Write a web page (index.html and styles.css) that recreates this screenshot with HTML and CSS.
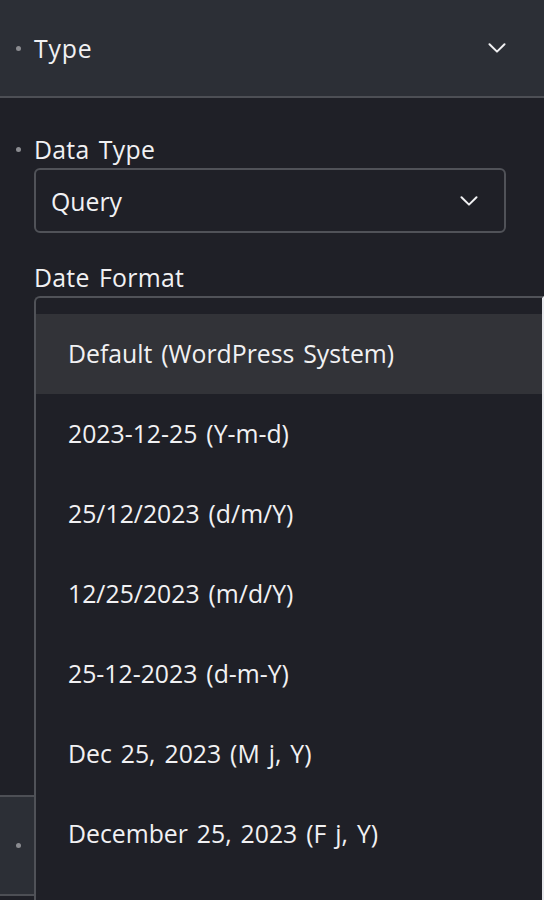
FILE: index.html
```html
<!DOCTYPE html>
<html lang="en">
<head>
<meta charset="utf-8">
<title>Field settings</title>
<link rel="stylesheet" href="styles.css">
</head>
<body>
<div class="panel">
  <section class="section">
    <header class="section-head">
      <span class="dot"></span>
      <span class="section-title">Type</span>
      <svg class="chevron" width="18" height="10" viewBox="0 0 18 10"><path d="M1.5 1.2 L9 8.6 L16.5 1.2"/></svg>
    </header>
    <div class="section-body">
      <div class="field">
        <div class="field-label has-dot"><span class="dot"></span>Data Type</div>
        <div class="select">
          <span class="select-value">Query</span>
          <svg class="chevron" width="18" height="10" viewBox="0 0 18 10"><path d="M1.5 1.2 L9 8.6 L16.5 1.2"/></svg>
        </div>
      </div>
      <div class="field">
        <div class="field-label">Date Format</div>
        <div class="select-wrap">
          <ul class="menu">
            <li class="option is-active">Default (WordPress System)</li>
            <li class="option">2023-12-25 (Y-m-d)</li>
            <li class="option">25/12/2023 (d/m/Y)</li>
            <li class="option">12/25/2023 (m/d/Y)</li>
            <li class="option">25-12-2023 (d-m-Y)</li>
            <li class="option">Dec 25, 2023 (M j, Y)</li>
            <li class="option">December 25, 2023 (F j, Y)</li>
          </ul>
        </div>
      </div>
    </div>
  </section>
  <section class="section">
    <header class="section-head section-head--next">
      <span class="dot"></span>
    </header>
  </section>
</div>
</body>
</html>
```
FILE: styles.css
```css
* { box-sizing: border-box; }

html, body {
  margin: 0;
  height: 900px;
  overflow: hidden;
  background: #1f2027;
}

body {
  font-family: "Open Sans", "Noto Sans", sans-serif;
  font-size: 24.8px;
  word-spacing: 2.5px;
  color: #f1f1f3;
}

.panel {
  width: 544px;
  height: 900px;
  overflow: hidden;
  background: #1f2027;
}

/* collapsible section header */
.section-head {
  display: flex;
  align-items: center;
  gap: 13px;
  height: 98px;
  padding: 0 38px 0 16px;
  background: #2c2f36;
  border-bottom: 2px solid #4d4f55;
}

.section-head--next {
  height: 101px;
  border-top: 2px solid #4d4f55;
}

.section-title {
  flex: 1;
  letter-spacing: 0.8px;
}

.dot {
  flex: none;
  width: 5px;
  height: 5px;
  border-radius: 50%;
  background: #8b8c91;
}

.chevron {
  flex: none;
  fill: none;
  stroke: #f1f1f3;
  stroke-width: 2;
  stroke-linecap: round;
  stroke-linejoin: round;
}

.section-body {
  display: flex;
  flex-direction: column;
  gap: 29px;
  padding: 36px 38px 434px 34px;
}

.field {
  display: flex;
  flex-direction: column;
  gap: 4px;
}

.field-label {
  line-height: 30px;
  letter-spacing: 0.3px;
}

.field-label.has-dot {
  display: flex;
  align-items: center;
  gap: 13px;
  margin-left: -18px;
}

.select {
  display: flex;
  align-items: center;
  height: 65px;
  padding: 0 26px 0 15px;
  border: 2px solid #505258;
  border-radius: 6px;
}

.select-value {
  flex: 1;
}

/* the open select keeps its closed height in the flow; its list hangs over what follows */
.select-wrap {
  position: relative;
  height: 65px;
}

.menu {
  position: absolute;
  top: 0;
  left: 0;
  width: 510px;
  height: 604px;
  margin: 0;
  padding: 16px 0 0;
  list-style: none;
  background: #1f2027;
  border-top: 2px solid #505258;
  border-left: 2px solid #505258;
  border-right: 2px solid #e7e8ec;
  border-top-left-radius: 6px;
  overflow: hidden;
}

.option {
  display: flex;
  align-items: center;
  height: 80px;
  padding: 0 0 3px 32px;
  white-space: nowrap;
}

.option.is-active {
  background: #323338;
}
```
